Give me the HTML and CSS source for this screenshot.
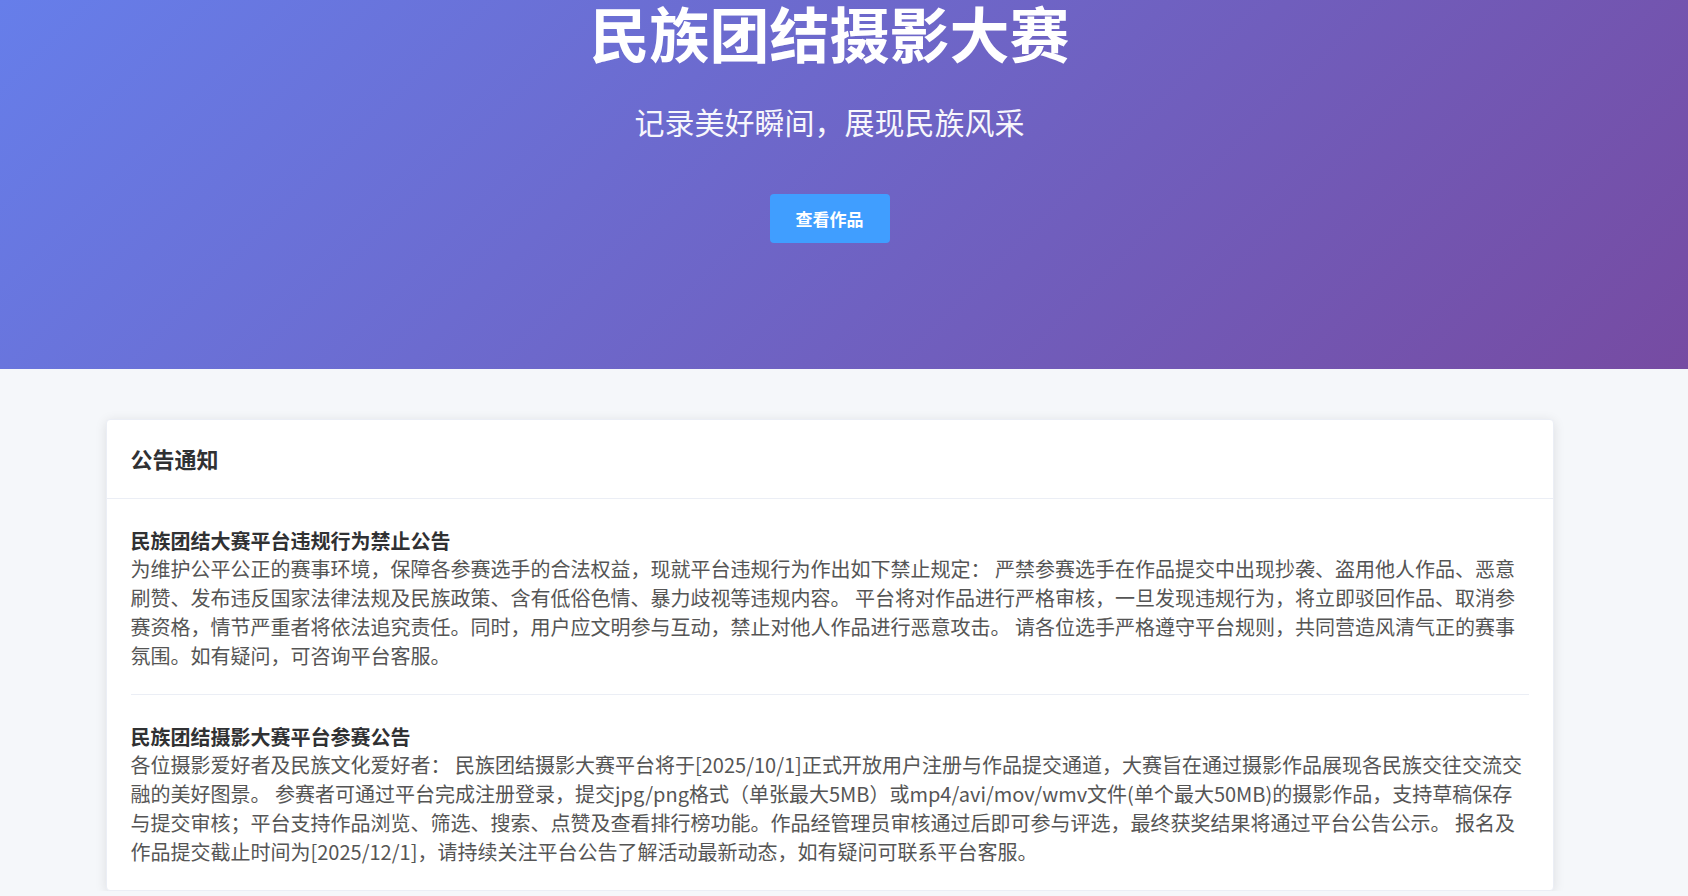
FILE: index.html
```html
<!DOCTYPE html>
<html lang="zh-CN">
<head>
<meta charset="utf-8">
<title>民族团结摄影大赛</title>
<link rel="stylesheet" href="styles.css">
</head>
<body>
<section class="hero">
  <div class="hero-inner">
    <h1 class="hero-title">民族团结摄影大赛</h1>
    <p class="hero-subtitle">记录美好瞬间，展现民族风采</p>
    <button class="hero-btn" type="button">查看作品</button>
  </div>
</section>
<main class="main">
  <div class="card">
    <div class="card-header">公告通知</div>
    <div class="card-body">
      <div class="notice">
        <div class="notice-title">民族团结大赛平台违规行为禁止公告</div>
        <div class="notice-content">为维护公平公正的赛事环境，保障各参赛选手的合法权益，现就平台违规行为作出如下禁止规定： 严禁参赛选手在作品提交中出现抄袭、盗用他人作品、恶意刷赞、发布违反国家法律法规及民族政策、含有低俗色情、暴力歧视等违规内容。 平台将对作品进行严格审核，一旦发现违规行为，将立即驳回作品、取消参赛资格，情节严重者将依法追究责任。同时，用户应文明参与互动，禁止对他人作品进行恶意攻击。 请各位选手严格遵守平台规则，共同营造风清气正的赛事氛围。如有疑问，可咨询平台客服。</div>
      </div>
      <div class="notice">
        <div class="notice-title">民族团结摄影大赛平台参赛公告</div>
        <div class="notice-content">各位摄影爱好者及民族文化爱好者： 民族团结摄影大赛平台将于[2025/10/1]正式开放用户注册与作品提交通道，大赛旨在通过摄影作品展现各民族交往交流交融的美好图景。 参赛者可通过平台完成注册登录，提交jpg/png格式（单张最大5MB）或mp4/avi/mov/wmv文件(单个最大50MB)的摄影作品，支持草稿保存与提交审核；平台支持作品浏览、筛选、搜索、点赞及查看排行榜功能。作品经管理员审核通过后即可参与评选，最终获奖结果将通过平台公告公示。 报名及作品提交截止时间为[2025/12/1]，请持续关注平台公告了解活动最新动态，如有疑问可联系平台客服。</div>
      </div>
    </div>
  </div>
</main>
</body>
</html>
```

FILE: styles.css
```css
* {
  box-sizing: border-box;
}

html, body {
  margin: 0;
  padding: 0;
}

body {
  font-family: "Noto Sans CJK SC", "Noto Sans", sans-serif;
  background: #f5f7fa;
  color: #606266;
  overflow: hidden;
}

.hero {
  background: linear-gradient(135deg, #667eea 0%, #764ba2 100%);
  height: 369px;
}

.hero-inner {
  display: flex;
  flex-direction: column;
  align-items: center;
  padding: 2px 29px 0 0;
  color: #fff;
}

.hero-title {
  margin: 0;
  font-size: 60px;
  line-height: 60px;
  font-weight: 700;
}

.hero-subtitle {
  margin: 37px 0 0;
  font-size: 30px;
  line-height: 45px;
  font-weight: 400;
  opacity: 0.95;
}

.hero-btn {
  margin-top: 50px;
  border: none;
  border-radius: 4px;
  background: #409eff;
  color: #fff;
  font-family: inherit;
  font-size: 17px;
  line-height: 25px;
  font-weight: 700;
  padding: 12px 26px;
}

.main {
  padding: 50px 29px 0 0;
  display: flex;
  justify-content: center;
}

.card {
  width: 1448px;
  background: #fff;
  border: 1px solid #ebeef5;
  border-radius: 4px;
  box-shadow: 0 2px 12px 0 rgba(0, 0, 0, 0.1);
}

.card-header {
  padding: 22px 24px 23px;
  line-height: 33px;
  font-size: 22px;
  font-weight: 700;
  color: #303133;
  border-bottom: 1px solid #ebeef5;
}

.card-body {
  padding: 0 24px;
}

.notice {
  padding: 28px 0 24px;
  border-bottom: 1px solid #ebeef5;
}

.notice:last-child {
  border-bottom: none;
  padding-bottom: 24px;
}

.notice-title {
  font-size: 20px;
  line-height: 27px;
  font-weight: 700;
  color: #303133;
}

.notice-content {
  font-size: 20px;
  line-height: 29px;
  color: #555;
}
```
